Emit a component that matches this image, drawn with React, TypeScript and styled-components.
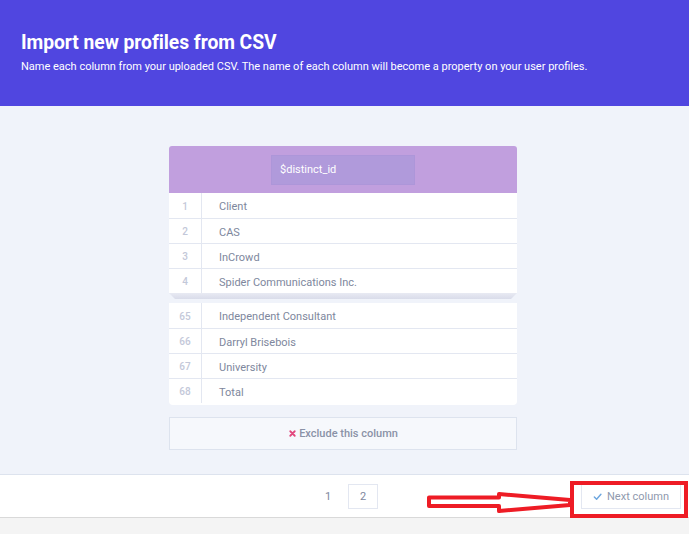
import React from "react";
import styled, { createGlobalStyle } from "styled-components";

const Global = createGlobalStyle`
  html, body { margin: 0; padding: 0; background: #f4f4f4; }
  body { font-family: Roboto, "Noto Sans", Arial, sans-serif; -webkit-font-smoothing: antialiased; }
  * { box-sizing: border-box; }
`;

const Page = styled.div`
  position: relative;
  width: 689px;
  height: 534px;
  display: flex;
  flex-direction: column;
  background: #f4f4f4;
`;

const Header = styled.header`
  height: 106px;
  background: #5046e0;
  color: #fff;
  padding: 32px 21px 0;
  display: flex;
  flex-direction: column;
  gap: 6px;
`;

const Title = styled.h1`
  margin: 0;
  font-size: 19.3px;
  line-height: 22px;
  font-weight: 700;
  letter-spacing: -0.05px;
`;

const Subtitle = styled.p`
  margin: 0;
  font-size: 11px;
  line-height: 14px;
  font-weight: 400;
`;

const Main = styled.main`
  height: 368px;
  background: #f0f3fa;
  padding: 40px 3px 0 0;
  display: flex;
  flex-direction: column;
  align-items: center;
`;

const Column = styled.div`
  width: 348px;
  display: flex;
  flex-direction: column;
`;

const CardHead = styled.div`
  height: 47px;
  background: #c19fde;
  border-radius: 3px 3px 0 0;
  display: flex;
  align-items: center;
  justify-content: center;
`;

const NameInput = styled.div`
  width: 144px;
  height: 30px;
  background: #b09adb;
  border: 1px solid #ad96d9;
  color: #fff;
  font-size: 11px;
  display: flex;
  align-items: center;
  padding-left: 8px;
`;

const Group = styled.div<{ $last?: boolean }>`
  background: #fff;
  border-radius: ${(p) => (p.$last ? "0 0 4px 4px" : "0")};
  padding-bottom: ${(p) => (p.$last ? "2px" : "0")};
  overflow: hidden;
`;

const Row = styled.div<{ $first?: boolean }>`
  display: grid;
  grid-template-columns: 33px 1fr;
  height: 25px;
  border-top: ${(p) => (p.$first ? "none" : "1px solid #e3e7f1")};
`;

const Num = styled.div`
  border-right: 1px solid #e3e7f1;
  display: flex;
  align-items: center;
  justify-content: center;
  padding-top: 1px;
  font-size: 10px;
  color: #c3c8d9;
  font-weight: 500;
`;

const Cell = styled.div`
  display: flex;
  align-items: center;
  padding: 2px 0 0 17px;
  font-size: 11px;
  color: #7e879d;
`;

const Fold = styled.div`
  height: 6px;
  background: linear-gradient(#e8eaf3, #d9dcea);
  clip-path: polygon(0 0, 100% 0, calc(100% - 6px) 100%, 6px 100%);
  margin-bottom: 4px;
`;

const ExcludeButton = styled.button`
  margin-top: 12px;
  height: 33px;
  width: 348px;
  background: #f6f8fc;
  border: 1px solid #dde3ee;
  color: #8a92a7;
  font-family: inherit;
  font-size: 11px;
  font-weight: 500;
  display: flex;
  align-items: center;
  justify-content: center;
  gap: 2px;
  padding: 0;
`;

const Footer = styled.footer`
  height: 44px;
  background: #fff;
  border-top: 1px solid #dde3ee;
  border-bottom: 1px solid #d9d9d9;
  display: flex;
  align-items: center;
  padding-left: 313px;
`;

const Pager = styled.div`
  display: flex;
  align-items: center;
  gap: 5px;
`;

const PageNum = styled.div<{ $active?: boolean }>`
  width: 30px;
  height: 25px;
  display: flex;
  align-items: center;
  justify-content: center;
  font-size: 11px;
  color: #7e879d;
  border: 1px solid ${(p) => (p.$active ? "#e3e7f1" : "transparent")};
`;

const NextButton = styled.button`
  margin-left: 203px;
  width: 100px;
  height: 26px;
  background: #fff;
  border: 1px solid #e3e7f1;
  font-family: inherit;
  font-size: 11px;
  color: #8f99ae;
  display: flex;
  align-items: center;
  justify-content: center;
  gap: 5px;
  padding: 0;
`;

const Annotation = styled.svg`
  position: absolute;
  left: 0;
  top: 0;
  pointer-events: none;
`;

const top = ["Client", "CAS", "InCrowd", "Spider Communications Inc."];
const bottom = [
  ["65", "Independent Consultant"],
  ["66", "Darryl Brisebois"],
  ["67", "University"],
  ["68", "Total"],
];

export default function App() {
  return (
    <>
      <Global />
      <Page>
        <Header>
          <Title>Import new profiles from CSV</Title>
          <Subtitle>
            Name each column from your uploaded CSV. The name of each column will become a property on your user profiles.
          </Subtitle>
        </Header>
        <Main>
          <Column>
            <CardHead>
              <NameInput>$distinct_id</NameInput>
            </CardHead>
            <Group>
              {top.map((t, i) => (
                <Row key={t} $first={i === 0}>
                  <Num>{i + 1}</Num>
                  <Cell>{t}</Cell>
                </Row>
              ))}
            </Group>
            <Fold />
            <Group $last>
              {bottom.map(([n, t], i) => (
                <Row key={n} $first={i === 0}>
                  <Num>{n}</Num>
                  <Cell>{t}</Cell>
                </Row>
              ))}
            </Group>
          </Column>
          <ExcludeButton>
            <svg width="9" height="9" viewBox="0 0 10 10">
              <path d="M2.5 2.5l5 5M7.5 2.5l-5 5" stroke="#e2487d" strokeWidth="2" strokeLinecap="round" />
            </svg>
            Exclude this column
          </ExcludeButton>
        </Main>
        <Footer>
          <Pager>
            <PageNum>1</PageNum>
            <PageNum $active>2</PageNum>
          </Pager>
          <NextButton>
            <svg width="9" height="9" viewBox="0 0 10 10">
              <path d="M1.5 5.5l2.5 2.5 4.8-5.5" stroke="#6ea7df" strokeWidth="1.6" fill="none" strokeLinecap="round" strokeLinejoin="round" />
            </svg>
            Next column
          </NextButton>
        </Footer>
        <Annotation width="689" height="534" viewBox="0 0 689 534">
          <rect x="572" y="483" width="114" height="33" fill="none" stroke="#ee1c25" strokeWidth="4" />
          <path
            d="M429 497.5 L499 497.5 L499 494 L570 500 L570 505 L499 511 L499 506 L429 506 Z"
            fill="#fff"
            stroke="#ee1c25"
            strokeWidth="4"
            strokeLinejoin="round"
          />
        </Annotation>
      </Page>
    </>
  );
}
